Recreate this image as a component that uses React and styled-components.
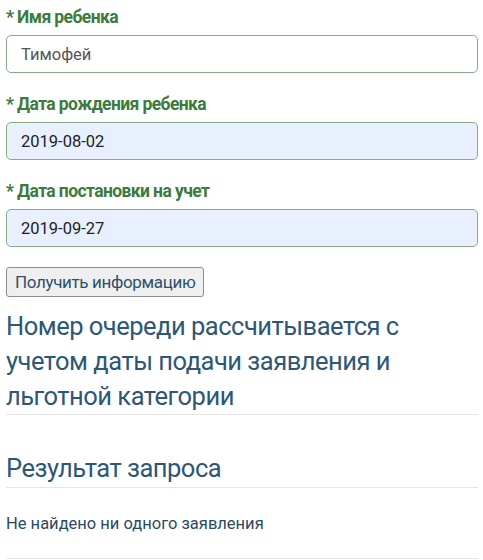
import * as React from "react";
import styled, { createGlobalStyle } from "styled-components";

const GlobalStyle = createGlobalStyle`
  body {
    margin: 0;
    background: #fff;
    font-family: Roboto, "Noto Sans", "Liberation Sans", sans-serif;
  }
`;

const Page = styled.div`
  padding: 6px 5px 0 6px;
`;

const Field = styled.div`
  display: flex;
  flex-direction: column;
  gap: 7px;
  margin-bottom: 20px;
`;

const Label = styled.label`
  font-size: 17.5px;
  line-height: 22px;
  font-weight: 700;
  letter-spacing: -0.6px;
  color: #3b7b3c;
`;

const Input = styled.input`
  box-sizing: border-box;
  width: 100%;
  height: 38px;
  padding: 0 14px;
  border: 1.5px solid #8aa98a;
  border-radius: 5px;
  background: ${(p) => (p.$filled ? "#e8f0fe" : "#fff")};
  color: ${(p) => (p.$filled ? "#222" : "#555")};
  font-family: inherit;
  font-size: 16.5px;
  outline: none;
`;

const Button = styled.button`
  height: 30px;
  padding: 0 8px;
  border: 1px solid #8c8c8c;
  border-radius: 3px;
  background: #efefef;
  color: #2d4f6c;
  font-family: inherit;
  font-size: 17px;
  letter-spacing: -0.35px;
  cursor: pointer;
`;

const Heading = styled.h2`
  margin: ${(p) => p.$top}px 0 0;
  padding-bottom: ${(p) => p.$pad}px;
  border-bottom: 1px solid #e6e6e6;
  font-size: 25.5px;
  line-height: 35px;
  font-weight: 400;
  letter-spacing: -0.5px;
  color: #2c5777;
`;

const Message = styled.p`
  margin: 26px 0 0;
  padding-bottom: 24px;
  border-bottom: 1px solid #e6e6e6;
  font-size: 16.5px;
  line-height: 20px;
  color: #2c4a62;
`;

const fields = [
  { id: "name", label: "* Имя ребенка", value: "Тимофей" },
  { id: "birth", label: "* Дата рождения ребенка", value: "2019-08-02", filled: true },
  { id: "reg", label: "* Дата постановки на учет", value: "2019-09-27", filled: true },
];

const App = () => {
  return (
    <>
      <GlobalStyle />
      <Page>
        {fields.map((f) => (
          <Field key={f.id}>
            <Label htmlFor={f.id}>{f.label}</Label>
            <Input id={f.id} defaultValue={f.value} $filled={f.filled} />
          </Field>
        ))}
        <Button type="button">Получить информацию</Button>
        <Heading $top={12} $pad={0}>
          Номер очереди рассчитывается с учетом даты подачи заявления и льготной категории
        </Heading>
        <Heading $top={36} $pad={1}>
          Результат запроса
        </Heading>
        <Message>Не найдено ни одного заявления</Message>
      </Page>
    </>
  );
};

export default App;
